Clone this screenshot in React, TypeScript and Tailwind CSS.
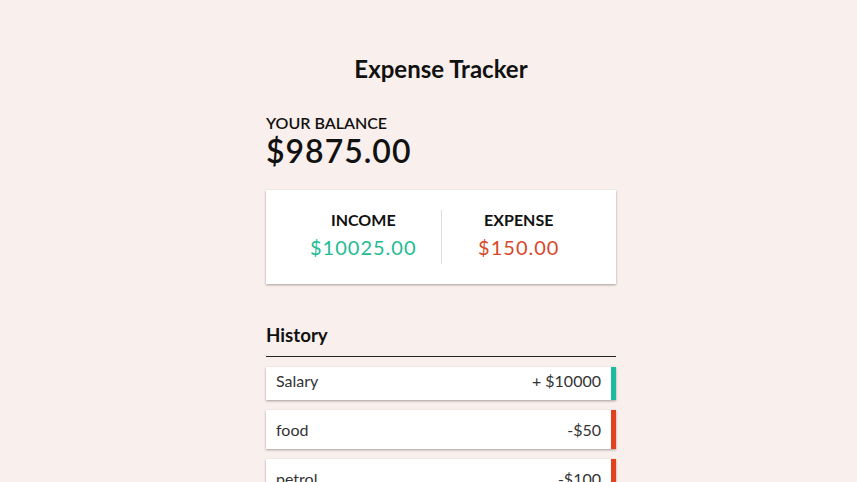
import React from "react";

const shadow = "shadow-[0_1px_3px_rgba(0,0,0,0.12),0_1px_2px_rgba(0,0,0,0.24)]";

export default function App() {
  return (
    <div className="min-h-screen bg-[#f9efec] font-['Lato',sans-serif] flex justify-center pl-[25px] text-[#111]">
      <div className="w-[350px] pt-[55px] pb-[30px]">
        <h2 className="text-center text-[24px] font-bold leading-[1.2]">Expense Tracker</h2>
        <h4 className="mt-[29px] text-[16px] font-semibold leading-[1.2] uppercase">Your Balance</h4>
        <h1 className="text-[32px] font-semibold leading-[1.2] tracking-[1px]">$9875.00</h1>
        <div className={`mt-5 bg-white p-5 flex ${shadow}`}>
          <div className="flex-1 text-center border-r border-[#dedede]">
            <h4 className="text-[16px] font-bold leading-[1.2] uppercase">Income</h4>
            <p className="text-[20px] leading-[1.2] tracking-[1px] my-[5px] text-[#1fbb94]">$10025.00</p>
          </div>
          <div className="flex-1 text-center">
            <h4 className="text-[16px] font-bold leading-[1.2] uppercase">Expense</h4>
            <p className="text-[20px] leading-[1.2] tracking-[1px] my-[5px] text-[#d8482a]">$150.00</p>
          </div>
        </div>
        <h3 className="mt-10 text-[18.72px] font-bold leading-[1.2] pb-[10px] border-b border-[#222] mb-[10px]">History</h3>
        <ul>
          <li className={`bg-white text-[#333] flex justify-between px-[10px] pt-[4px] pb-[10px] my-[10px] text-[16px] leading-[1.2] border-r-[5px] border-[#1abc9c] ${shadow}`}>
            <span>Salary</span>
            <span>+ $10000</span>
          </li>
          <li className={`bg-white text-[#333] flex justify-between px-[10px] py-[10px] my-[10px] text-[16px] leading-[1.2] border-r-[5px] border-[#e3401c] ${shadow}`}>
            <span>food</span>
            <span>-$50</span>
          </li>
          <li className={`bg-white text-[#333] flex justify-between px-[10px] py-[10px] my-[10px] text-[16px] leading-[1.2] border-r-[5px] border-[#e3401c] ${shadow}`}>
            <span>petrol</span>
            <span>-$100</span>
          </li>
        </ul>
      </div>
    </div>
  );
}
